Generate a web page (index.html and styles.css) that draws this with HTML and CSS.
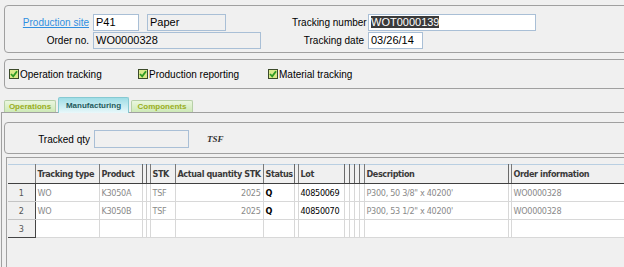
FILE: index.html
```html
<!doctype html>
<html>
<head>
    <title>Production tracking</title>
    <link rel="stylesheet" href="styles.css">
</head>
<body>
    <div class="group head-group">
        <a class="label link" href="#">Production site</a>
        <div class="field-row">
            <div class="field site">P41</div>
            <div class="field disabled site-name">Paper</div>
        </div>
        <span class="label">Tracking number</span>
        <div class="field track-no"><span class="selected">WOT0000139</span></div>

        <span class="label">Order no.</span>
        <div class="field disabled order-no">WO0000328</div>
        <span class="label">Tracking date</span>
        <div class="field track-date">03/26/14</div>
    </div>

    <div class="group options-group">
        <label class="check-item">
            <svg class="check" width="10" height="10" viewBox="0 0 10 10"><rect x="0.5" y="0.5" width="9" height="9" fill="#d9e88a" stroke="#3b4a2a"/><path d="M2 5 L4.2 7.3 L8 2.2" fill="none" stroke="#2f9a24" stroke-width="1.8"/></svg>
            Operation tracking
        </label>
        <label class="check-item">
            <svg class="check" width="10" height="10" viewBox="0 0 10 10"><rect x="0.5" y="0.5" width="9" height="9" fill="#d9e88a" stroke="#3b4a2a"/><path d="M2 5 L4.2 7.3 L8 2.2" fill="none" stroke="#2f9a24" stroke-width="1.8"/></svg>
            Production reporting
        </label>
        <label class="check-item">
            <svg class="check" width="10" height="10" viewBox="0 0 10 10"><rect x="0.5" y="0.5" width="9" height="9" fill="#d9e88a" stroke="#3b4a2a"/><path d="M2 5 L4.2 7.3 L8 2.2" fill="none" stroke="#2f9a24" stroke-width="1.8"/></svg>
            Material tracking
        </label>
    </div>

    <div class="tabs">
        <div class="tab ops">Operations</div>
        <div class="tab manu active">Manufacturing</div>
        <div class="tab comp">Components</div>
    </div>

    <div class="tab-panel">
        <div class="group qty-group">
            <span class="label">Tracked qty</span>
            <div class="field disabled qty"></div>
            <span class="unit">TSF</span>
        </div>

        <div class="grid-frame">
            <table class="grid">
                <colgroup>
                    <col style="width:27px"><col style="width:64px"><col style="width:43px">
                    <col style="width:4px"><col style="width:4px">
                    <col style="width:25px"><col style="width:88px"><col style="width:31px">
                    <col style="width:4px"><col style="width:46px">
                    <col style="width:5px"><col style="width:5px"><col style="width:5px"><col style="width:5px">
                    <col style="width:144px"><col style="width:3px"><col style="width:130px">
                </colgroup>
                <thead>
                    <tr>
                        <th class="rowhead"></th>
                        <th>Tracking type</th>
                        <th>Product</th>
                        <th class="thin"></th><th class="thin"></th>
                        <th>STK</th>
                        <th>Actual quantity STK</th>
                        <th>Status</th>
                        <th class="thin"></th>
                        <th>Lot</th>
                        <th class="thin"></th><th class="thin"></th><th class="thin"></th><th class="thin"></th>
                        <th>Description</th>
                        <th class="thin"></th>
                        <th>Order information</th>
                    </tr>
                </thead>
                <tbody>
                    <tr>
                        <td class="rowhead">1</td>
                        <td>WO</td>
                        <td>K3050A</td>
                        <td></td><td></td>
                        <td>TSF</td>
                        <td class="num">2025</td>
                        <td class="status">Q</td>
                        <td></td>
                        <td class="lot">40850069</td>
                        <td></td><td></td><td></td><td></td>
                        <td>P300, 50 3/8" x 40200'</td>
                        <td></td>
                        <td>WO0000328</td>
                    </tr>
                    <tr>
                        <td class="rowhead">2</td>
                        <td>WO</td>
                        <td>K3050B</td>
                        <td></td><td></td>
                        <td>TSF</td>
                        <td class="num">2025</td>
                        <td class="status">Q</td>
                        <td></td>
                        <td class="lot">40850070</td>
                        <td></td><td></td><td></td><td></td>
                        <td>P300, 53 1/2" x 40200'</td>
                        <td></td>
                        <td>WO0000328</td>
                    </tr>
                    <tr class="last">
                        <td class="rowhead">3</td>
                        <td></td><td></td>
                        <td></td><td></td>
                        <td></td><td></td><td></td>
                        <td></td><td></td>
                        <td></td><td></td><td></td><td></td>
                        <td></td><td></td><td></td>
                    </tr>
                </tbody>
            </table>
        </div>
    </div>
</body>
</html>
```

FILE: styles.css
```css
body {
    margin: 0;
    background-color: #f0f0f0;
    font-family: "Liberation Sans", Arial, sans-serif;
    font-size: 10px;
    color: #000;
    overflow: hidden;
    width: 624px;
    height: 267px;
}

.group {
    border: 1px solid #a0a0a0;
    border-radius: 4px;
    margin-right: -20px;
}

.label {
    text-align: right;
    align-self: center;
    white-space: nowrap;
}

.link {
    color: #2f8fe0;
    text-decoration: underline;
}

.field {
    box-sizing: border-box;
    height: 17px;
    border: 1px solid #a9bfd6;
    background-color: #fff;
    padding: 1px 2px;
    line-height: 13px;
    font-size: 11px;
    white-space: nowrap;
}
.field.disabled {
    background-color: #f0f0f0;
}

.selected {
    background-color: #3a3a3a;
    color: #fff;
}

/* header block */
.head-group {
    margin-top: 5px;
    margin-left: 4px;
    padding: 8px 0 3px 0;
    display: grid;
    grid-template-columns: 84px 195px 72px 1fr;
    column-gap: 4px;
    row-gap: 1px;
}

.field-row {
    display: flex;
    gap: 8px;
}
.site { width: 46px; }
.site-name { width: 79px; }
.order-no { width: 168px; }
.track-no { width: 168px; }
.track-date { width: 55px; }

/* checkboxes */
.options-group {
    margin-top: 6px;
    margin-left: 4px;
    height: 28px;
    padding-left: 4px;
    display: grid;
    grid-template-columns: 129px 130px auto;
    align-items: center;
}
.check-item {
    display: flex;
    align-items: center;
    gap: 1px;
}
.check {
    flex-shrink: 0;
}

/* tabs */
.tabs {
    margin-top: 8px;
    margin-left: 4px;
    height: 15px;
    display: flex;
    align-items: flex-end;
    gap: 2px;
    position: relative;
    z-index: 1;
}
.tab {
    box-sizing: border-box;
    height: 12px;
    border: 1px solid #b7cfa8;
    border-bottom: none;
    border-radius: 2px 2px 0 0;
    background: linear-gradient(#eaf6df, #cde9b6);
    color: #9aae1c;
    font-size: 8px;
    font-weight: bold;
    text-align: center;
    line-height: 11px;
}
.tab.ops { width: 52px; }
.tab.manu { width: 71px; }
.tab.comp { width: 62px; }
.tab.active {
    height: 16px;
    margin-bottom: -1px;
    border-color: #86c9d2;
    background: linear-gradient(#9fdde6, #e9f8fa);
    color: #1e5a5c;
    line-height: 15px;
}

.tab-panel {
    border-top: 1px solid #a0a0a0;
    border-left: 1px solid #a0a0a0;
    margin-left: 1px;
    height: 200px;
}

/* tracked qty */
.qty-group {
    margin-top: 9px;
    margin-left: 2px;
    display: grid;
    grid-template-columns: 84px 95px auto;
    column-gap: 4px;
    align-items: center;
    padding-left: 1px;
    padding-top: 2px;
    box-sizing: border-box;
    height: 32px;
}
.qty { width: 95px; height: 18px; }
.unit {
    margin-left: 14px;
    font-family: "Liberation Serif", serif;
    font-style: italic;
    font-weight: bold;
    font-size: 9px;
    color: #333;
}

/* grid */
.grid-frame {
    margin-top: 3px;
    margin-left: 4px;
    border: 1px solid #a0a0a0;
    border-right: none;
    padding: 6px 0 0 1px;
    height: 160px;
}

.grid {
    width: 633px;
    border-collapse: collapse;
    table-layout: fixed;
    font-family: "DejaVu Sans Condensed", "Liberation Sans", sans-serif;
    font-size: 9px;
    letter-spacing: -0.3px;
    border-top: 1px solid #b9cfe2;
}
.grid th {
    height: 18px;
    padding: 0 2px;
    background-color: #f0f0f0;
    color: #3a3a3a;
    font-weight: bold;
    letter-spacing: -0.4px;
    text-align: left;
    white-space: nowrap;
    overflow: hidden;
    border-left: 1px solid #7a7a7a;
    border-bottom: 1px solid #404040;
}
.grid th.thin {
    padding: 0;
    border-left: 1px solid #6a6a6a;
}
.grid th.rowhead {
    border-left: none;
}
.grid td {
    height: 17px;
    padding: 0 2px;
    background-color: #fff;
    color: #8a8a8a;
    white-space: nowrap;
    overflow: hidden;
    border: 1px solid #d8d8d8;
    border-top: none;
}
.grid td.rowhead {
    background-color: #f0f0f0;
    color: #555;
    text-align: center;
    border-left: none;
    border-right: 1px solid #454545;
    border-bottom: 1px solid #c4c4c4;
}
.grid tr.last td.rowhead {
    border-bottom: 1px solid #454545;
}
.grid td.num {
    text-align: right;
}
.grid td.status {
    color: #000;
    font-weight: bold;
}
.grid td.lot {
    color: #000;
}
```
